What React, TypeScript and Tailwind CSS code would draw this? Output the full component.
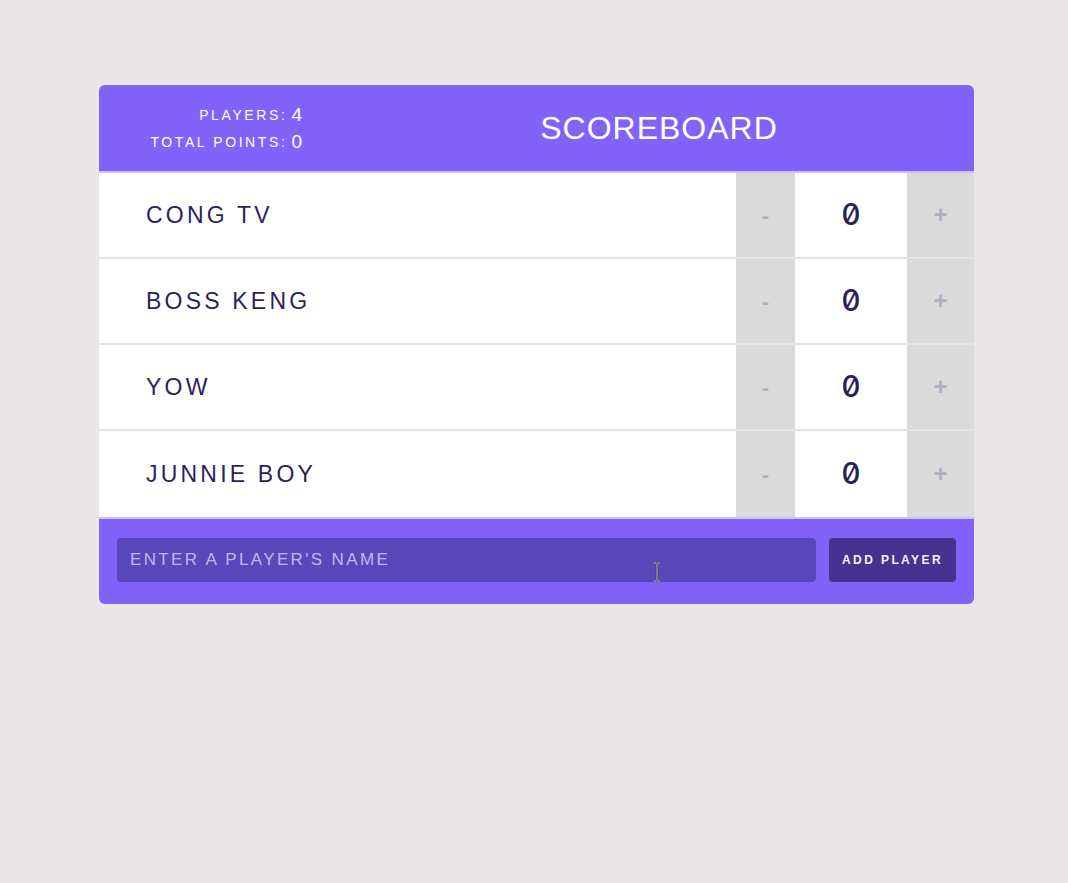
import React from "react";

const players = ["CONG TV", "BOSS KENG", "YOW", "JUNNIE BOY"];

export default function App() {
  return (
    <div className="min-h-[883px] w-full bg-[#e8e6e7] pt-[85px] font-['Liberation_Sans',Arial,sans-serif]">
      <div className="relative ml-[99px] w-[875px] overflow-hidden rounded-[6px]">
        {/* header */}
        <div className="flex h-[88px] items-center bg-[#8163fa] border-b-2 border-[#cbc1f7]">
          <div className="flex w-[245px] flex-col items-end pr-[42px] pt-[1px] text-white">
            <div className="flex h-[27px] items-center">
              <span className="text-[14px] tracking-[2.6px]">PLAYERS:</span>
              <span className="ml-[4px] text-[19px]">4</span>
            </div>
            <div className="flex h-[27px] items-center">
              <span className="text-[14px] tracking-[2.6px]">TOTAL POINTS:</span>
              <span className="ml-[4px] text-[19px]">0</span>
            </div>
          </div>
          <div className="flex-1 text-center text-[32px] tracking-[1px] text-white">SCOREBOARD</div>
        </div>
        {/* rows */}
        {players.map((p, i) => (
          <div
            key={p}
            className={`flex h-[86px] bg-white ${i < players.length - 1 ? "border-b-2 border-[#e4e3e7]" : ""}`}
          >
            <div className="flex flex-1 items-center pl-[47px] text-[23px] tracking-[3.2px] text-[#2b1f5c]">{p}</div>
            <div className="flex w-[59px] items-center justify-center bg-[#dadada] text-[22px] font-bold text-[#b1aebd]">-</div>
            <div className="flex w-[112px] items-center justify-center bg-white pb-[2px] font-['Inter',sans-serif] text-[30px] font-medium slashed-zero tabular-nums text-[#2b1f5c]">0</div>
            <div className="flex w-[67px] items-center justify-center bg-[#dadada] text-[24px] font-bold text-[#b1aebd]">+</div>
          </div>
        ))}
        {/* footer */}
        <div className="flex h-[87px] items-center gap-[13px] border-t-2 border-[#cbc1f7] bg-[#8163fa] px-[18px] pb-[3px]">
          <input
            className="h-[44px] flex-1 rounded-[4px] bg-[#5a47b9] px-[13px] text-[17px] tracking-[2.35px] text-white placeholder:text-[#c2b6f2] outline-none"
            placeholder="ENTER A PLAYER'S NAME"
          />
          <button className="h-[44px] w-[127px] rounded-[4px] bg-[#45338f] text-[12px] font-bold tracking-[2.4px] text-[#f3f1fb]">
            ADD PLAYER
          </button>
        </div>
        {/* mouse I-beam cursor */}
        <svg className="pointer-events-none absolute left-[554px] top-[477px]" width="8" height="20" viewBox="0 0 8 20">
          <path d="M1 1h2.5M4.5 1H7M4 1.5v17M1 19h2.5M4.5 19H7" stroke="#000" strokeWidth="2.2" fill="none" />
          <path d="M1 1h2.5M4.5 1H7M4 1.5v17M1 19h2.5M4.5 19H7" stroke="#fff" strokeWidth="1" fill="none" />
        </svg>
      </div>
    </div>
  );
}
